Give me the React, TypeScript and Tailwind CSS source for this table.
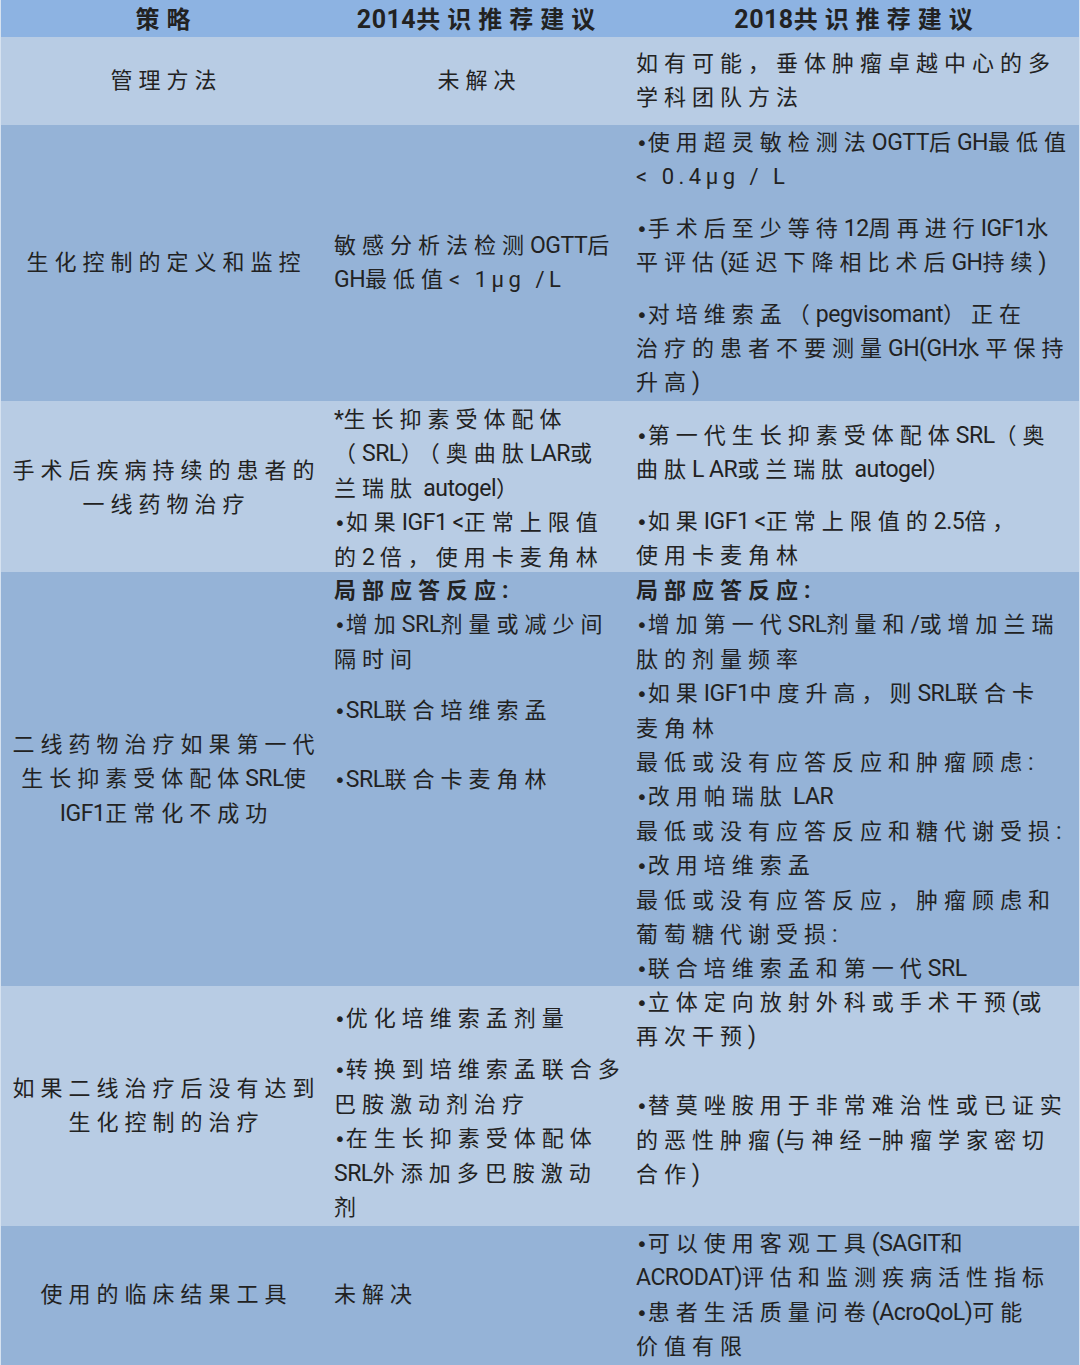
import React from "react";

const CJK_RE = /([\u2E80-\u9FFF\uF900-\uFAFF\uFF00-\uFFEF\u3000-\u303F]+)/;
const LAT = "font-['Roboto','Noto_Sans_CJK_SC',sans-serif] text-[23px] tracking-[-0.5px]";
const WIDE = "font-['Roboto','Noto_Sans_CJK_SC',sans-serif] text-[22px] tracking-[4.5px]";
const BUL = "font-['DejaVu_Sans',sans-serif] text-[20px]";

function latinRuns(s: string, key: string, cls: string): React.ReactNode[] {
  const out: React.ReactNode[] = [];
  s.split(/(•)/).forEach((t, k) => {
    if (!t) return;
    out.push(
      <span key={`${key}-${k}`} className={t === "•" ? BUL : cls}>
        {t}
      </span>
    );
  });
  return out;
}

function Runs({ text }: { text: string }) {
  const parts = text.split(/(\[\[.*?\]\])/);
  const out: React.ReactNode[] = [];
  parts.forEach((p, i) => {
    if (!p) return;
    if (p.startsWith("[[") && p.endsWith("]]")) {
      out.push(
        <span key={i} className={WIDE}>
          {p.slice(2, -2)}
        </span>
      );
      return;
    }
    p.split(CJK_RE).forEach((s, j) => {
      if (!s) return;
      if (j % 2 === 1) {
        out.push(
          <span key={`${i}-${j}`} className="tracking-[6px]">
            {s}
          </span>
        );
      } else {
        out.push(...latinRuns(s, `${i}-${j}`, LAT));
      }
    });
  });
  return <>{out}</>;
}

function Lines({ lines }: { lines: string[] }) {
  return (
    <>
      {lines.map((l, i) => {
        if (l === "~") return <div key={i} className="h-[17px] shrink-0" />;
        if (l === "~~") return <div key={i} className="h-[34.4px] shrink-0" />;
        const bold = l.startsWith("!");
        return (
          <div
            key={i}
            className={
              bold
                ? "h-[34.4px] shrink-0 leading-[34.4px] whitespace-nowrap font-bold"
                : "h-[34.4px] shrink-0 leading-[34.4px] whitespace-nowrap"
            }
          >
            <Runs text={bold ? l.slice(1) : l} />
          </div>
        );
      })}
    </>
  );
}

type Cell = { lines: string[]; cls: string };
type Row = { h: string; bg: string; cells: Cell[] };

const C1 = "flex flex-col justify-center items-center text-center pl-[6px]";
const C2C = "flex flex-col justify-center items-center text-center pl-[6px]";
const C2 = "flex flex-col justify-center pl-[8px]";
const C3 = "flex flex-col justify-center pl-[9px]";

const LIGHT = "bg-[#b8cce4]";
const DARK = "bg-[#95b3d7]";

const rows: Row[] = [
  {
    h: "h-[88px]",
    bg: LIGHT,
    cells: [
      { cls: C1, lines: ["管理方法"] },
      { cls: C2C, lines: ["未解决"] },
      { cls: C3, lines: ["如有可能，垂体肿瘤卓越中心的多", "学科团队方法"] },
    ],
  },
  {
    h: "h-[276px]",
    bg: DARK,
    cells: [
      { cls: C1, lines: ["生化控制的定义和监控"] },
      { cls: C2, lines: ["敏感分析法检测OGTT后", "GH最低值[[< 1μg /L]]"] },
      {
        cls: "flex flex-col justify-start pl-[9px] pt-[1px]",
        lines: [
          "•使用超灵敏检测法OGTT后GH最低值",
          "[[< 0.4μg / L]]",
          "~",
          "•手术后至少等待12周再进行IGF1水",
          "平评估(延迟下降相比术后GH持续)",
          "~",
          "•对培维索孟（pegvisomant）正在",
          "治疗的患者不要测量GH(GH水平保持",
          "升高)",
        ],
      },
    ],
  },
  {
    h: "h-[171px]",
    bg: LIGHT,
    cells: [
      { cls: C1, lines: ["手术后疾病持续的患者的", "一线药物治疗"] },
      {
        cls: "flex flex-col justify-start pl-[8px] pt-[2px]",
        lines: [
          "*生长抑素受体配体",
          "（SRL）（奥曲肽LAR或",
          "兰瑞肽 autogel）",
          "•如果IGF1 <正常上限值",
          "的2 倍，使用卡麦角林",
        ],
      },
      {
        cls: "flex flex-col justify-start pl-[9px] pt-[18px]",
        lines: [
          "•第一代生长抑素受体配体SRL（奥",
          "曲肽L AR或兰瑞肽 autogel）",
          "~",
          "•如果IGF1 <正常上限值的2.5倍，",
          "使用卡麦角林",
        ],
      },
    ],
  },
  {
    h: "h-[414px]",
    bg: DARK,
    cells: [
      {
        cls: C1,
        lines: ["二线药物治疗如果第一代", "生长抑素受体配体SRL使", "IGF1正常化不成功"],
      },
      {
        cls: "flex flex-col justify-start pl-[8px] pt-[2px]",
        lines: [
          "!局部应答反应:",
          "•增加SRL剂量或减少间",
          "隔时间",
          "~",
          "•SRL联合培维索孟",
          "~~",
          "•SRL联合卡麦角林",
        ],
      },
      {
        cls: "flex flex-col justify-start pl-[9px] pt-[2px]",
        lines: [
          "!局部应答反应:",
          "•增加第一代SRL剂量和/或增加兰瑞",
          "肽的剂量频率",
          "•如果IGF1中度升高，则SRL联合卡",
          "麦角林",
          "最低或没有应答反应和肿瘤顾虑:",
          "•改用帕瑞肽 LAR",
          "最低或没有应答反应和糖代谢受损:",
          "•改用培维索孟",
          "最低或没有应答反应，肿瘤顾虑和",
          "葡萄糖代谢受损:",
          "•联合培维索孟和第一代SRL",
        ],
      },
    ],
  },
  {
    h: "h-[240px]",
    bg: LIGHT,
    cells: [
      { cls: C1, lines: ["如果二线治疗后没有达到", "生化控制的治疗"] },
      {
        cls: "flex flex-col justify-start pl-[8px] pt-[16px]",
        lines: [
          "•优化培维索孟剂量",
          "~",
          "•转换到培维索孟联合多",
          "巴胺激动剂治疗",
          "•在生长抑素受体配体",
          "SRL外添加多巴胺激动",
          "剂",
        ],
      },
      {
        cls: "flex flex-col justify-start pl-[9px] pt-0",
        lines: [
          "•立体定向放射外科或手术干预(或",
          "再次干预)",
          "~~",
          "•替莫唑胺用于非常难治性或已证实",
          "的恶性肿瘤(与神经–肿瘤学家密切",
          "合作)",
        ],
      },
    ],
  },
  {
    h: "h-[139px]",
    bg: DARK,
    cells: [
      { cls: C1, lines: ["使用的临床结果工具"] },
      { cls: C2, lines: ["未解决"] },
      {
        cls: C3,
        lines: [
          "•可以使用客观工具(SAGIT和",
          "ACRODAT)评估和监测疾病活性指标",
          "•患者生活质量问卷(AcroQoL)可能",
          "价值有限",
        ],
      },
    ],
  },
];

export default function App() {
  return (
    <div className="w-[1080px] h-[1365px] overflow-hidden font-['Roboto','Noto_Sans_CJK_SC',sans-serif] text-[22px] text-[#222] border-l border-r border-[#d6e2f0]">
      <div className="grid grid-cols-[325px_301px_454px] h-[37px] pt-[1px] bg-[#8db3e2] font-bold text-[24px] text-[#222]">
        <div className="flex items-center justify-center pl-[6px]">
          <span className="tracking-[7px]">策略</span>
        </div>
        <div className="flex items-center justify-center pl-[6px]">
          <span className="tracking-[0.5px] text-[25px]">2014</span>
          <span className="tracking-[7px]">共识推荐建议</span>
        </div>
        <div className="flex items-center justify-center pl-[6px]">
          <span className="tracking-[0.5px] text-[25px]">2018</span>
          <span className="tracking-[7px]">共识推荐建议</span>
        </div>
      </div>
      {rows.map((r, i) => (
        <div key={i} className={`grid grid-cols-[325px_301px_454px] ${r.h} ${r.bg}`}>
          {r.cells.map((c, j) => (
            <div key={j} className={c.cls}>
              <Lines lines={c.lines} />
            </div>
          ))}
        </div>
      ))}
    </div>
  );
}
